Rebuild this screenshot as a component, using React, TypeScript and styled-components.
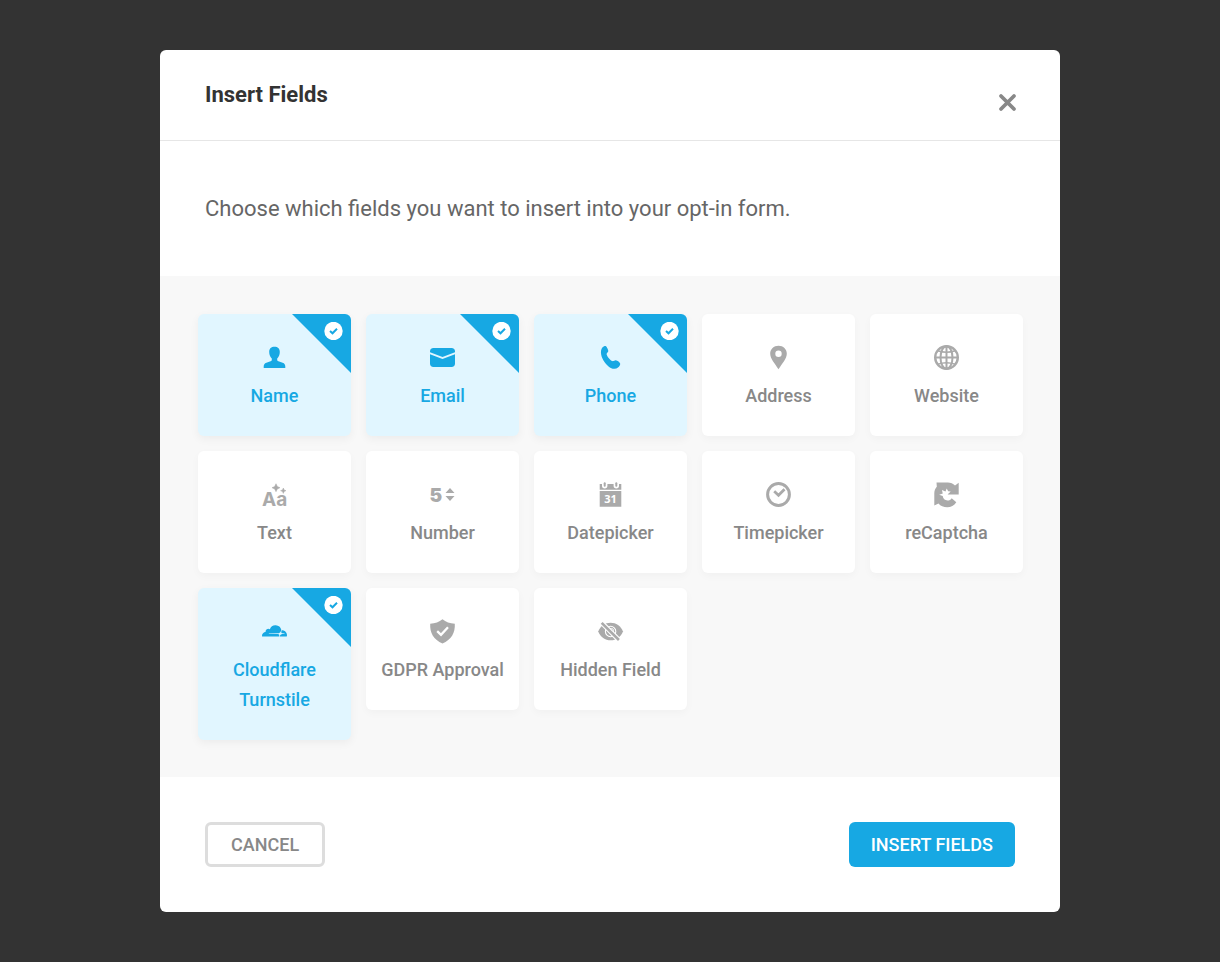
import React, { useState } from 'react';
import styled, { createGlobalStyle, css } from 'styled-components';
import { FaCloudflare } from 'react-icons/fa';

const GlobalStyle = createGlobalStyle`
  * { box-sizing: border-box; }
  body {
    margin: 0;
    background: #333;
    font-family: Roboto, "Liberation Sans", sans-serif;
  }
`;

const Overlay = styled.main`
  display: flex;
  justify-content: center;
  align-items: flex-start;
  min-height: 100vh;
  padding: 50px 20px;
  background: #333;
`;

const Modal = styled.form`
  width: 100%;
  max-width: 900px;
  background: #fff;
  border-radius: 6px;
  overflow: hidden;
`;

const Header = styled.header`
  display: flex;
  justify-content: space-between;
  align-items: flex-start;
  padding: 30px 30px 15px 45px;
  border-bottom: 1px solid #e6e6e6;
`;

const Title = styled.h1`
  margin: 0;
  font-size: 22px;
  line-height: 30px;
  font-weight: 700;
  color: #333;
`;

const CloseButton = styled.button`
  display: grid;
  place-items: center;
  width: 45px;
  height: 45px;
  padding: 0;
  border: 0;
  background: none;
  color: #888;
  cursor: pointer;
`;

const Intro = styled.p`
  margin: 0;
  padding: 45px;
  font-size: 22px;
  line-height: 45px;
  color: #666;
`;

const FieldGrid = styled.div`
  display: grid;
  grid-template-columns: repeat(5, 1fr);
  align-items: start;
  gap: 15px;
  padding: 38px 37px 37px 38px;
  background: #f8f8f8;
`;

const FieldCard = styled.label<{ $selected: boolean }>`
  position: relative;
  display: flex;
  flex-direction: column;
  align-items: center;
  gap: 10px;
  padding: 30px 15px 25px;
  border-radius: 6px;
  background: #fff;
  color: #aaa;
  box-shadow: 0 3px 8px rgba(0, 0, 0, 0.03);
  overflow: hidden;
  cursor: pointer;
  ${(p) =>
    p.$selected &&
    css`
      background: #e1f6ff;
      color: #17a8e3;
      box-shadow: 0 3px 10px rgba(0, 0, 0, 0.05);
    `}
`;

const HiddenCheckbox = styled.input`
  position: absolute;
  inset: 0;
  width: 100%;
  height: 100%;
  margin: 0;
  opacity: 0;
  cursor: pointer;
`;

const IconBox = styled.span`
  display: grid;
  place-items: center;
  height: 27px;
`;

const FieldName = styled.span<{ $selected: boolean }>`
  font-size: 18px;
  line-height: 30px;
  font-weight: 500;
  text-align: center;
  color: ${(p) => (p.$selected ? '#17a8e3' : '#888')};
`;

const Corner = styled.span`
  position: absolute;
  top: 0;
  right: 0;
  display: flex;
  justify-content: flex-end;
  width: 59px;
  height: 59px;
  padding: 8px;
  background: #17a8e3;
  clip-path: polygon(0 0, 100% 0, 100% 100%);
`;

const Footer = styled.footer`
  display: flex;
  justify-content: space-between;
  padding: 45px;
`;

const Button = styled.button<{ $primary?: boolean }>`
  height: 45px;
  padding: 0 23px;
  border: 3px solid #ddd;
  border-radius: 6px;
  background: #fff;
  font-family: inherit;
  font-size: 18px;
  line-height: 24px;
  font-weight: 500;
  color: #888;
  text-transform: uppercase;
  cursor: pointer;
  ${(p) =>
    p.$primary &&
    css`
      padding: 0 22px;
      border: 0;
      background: #17a8e3;
      color: #fff;
    `}
`;

const GlyphSvg = styled.svg`
  display: block;
  overflow: visible;
`;

const Glyph = ({ children }: { children: React.ReactNode }) => (
  <GlyphSvg width="27" height="27" viewBox="0 0 27 27" fill="currentColor" aria-hidden="true">
    {children}
  </GlyphSvg>
);

const icons: Record<string, React.ReactNode> = {
  name: (
    <Glyph>
      <path d="M13.500 2.700c3.200 0 5.300 1.900 5.300 5.200 0 2.900-1.100 5.200-2.600 6.500v1.300c0 .8.4 1.200 1.200 1.500l4.200 1.500c1.900.7 2.700 1.900 2.700 3.800V24H2.700v-1.500c0-1.900.8-3.100 2.700-3.800l4.200-1.500c.8-.3 1.200-.7 1.200-1.500v-1.300C9.300 13.100 8.200 10.800 8.200 7.900c0-3.300 2.100-5.200 5.300-5.200z" />
    </Glyph>
  ),
  email: (
    <Glyph>
      <path d="M1 8.300V7.500C1 5.300 2.200 4 4.500 4h18C24.800 4 26 5.300 26 7.500v.8l-12.500 4.600z" />
      <path d="M1 10.200l12.500 4.900L26 10.200v9.300c0 2.200-1.200 3.500-3.500 3.500h-18C2.200 23 1 21.700 1 19.500z" />
    </Glyph>
  ),
  phone: (
    <Glyph>
      <path d="M5.600 3.300c.9-.9 2.200-1.600 3-1.300 1.200.5 2.600 3.600 2.700 4.900.1 1.100-1.700 1.900-1.700 3.100 0 2 3.600 6.400 5.700 7.100 1.300.4 2.400-1.100 3.600-.9 1.300.2 4.200 2.200 4.300 3.500.1 1.100-.9 2.800-2.200 3.900-1.800 1.500-4.600 1.600-7.200.3C9.300 21.600 5.200 15.700 4.200 10.700 3.600 7.600 4 4.900 5.600 3.300z" />
    </Glyph>
  ),
  address: (
    <Glyph>
      <path fillRule="evenodd" d="M13.500 1.700c4.700 0 8.300 3.500 8.300 8 0 4.800-4.600 9.700-8.300 15.600C9.800 19.400 5.200 14.500 5.200 9.700c0-4.500 3.600-8 8.300-8zm0 4.800a3.200 3.200 0 100 6.400 3.200 3.200 0 000-6.400z" />
    </Glyph>
  ),
  website: (
    <Glyph>
      <g fill="none" stroke="currentColor" strokeWidth="2">
        <circle cx="13.500" cy="13.500" r="11.300" strokeWidth="2.400" />
        <ellipse cx="13.500" cy="13.500" rx="6" ry="11.300" />
        <path d="M13.500 2v23M2 13.500h23" />
        <path d="M4.800 6.800c5.300 1.800 12.100 1.800 17.400 0M4.800 20.200c5.300-1.800 12.100-1.800 17.400 0" strokeWidth="1.500" />
      </g>
    </Glyph>
  ),
  text: (
    <Glyph>
      <text x="1" y="25" fontFamily="Inter, sans-serif" fontWeight="700" fontSize="19">Aa</text>
      <path d="M15 2.700l1.300 2.700 2.700 1.300-2.700 1.300L15 10.700 13.700 8 11 6.700l2.700-1.300zM22.300 7l.8 1.900 1.900.8-1.900.8-.8 1.900-.8-1.900-1.900-.8 1.900-.8z" stroke="currentColor" strokeWidth="0.500" />
    </Glyph>
  ),
  number: (
    <Glyph>
      <text x="0.600" y="20.500" fontFamily="Inter, sans-serif" fontWeight="900" fontSize="19">5</text>
      <path d="M16.500 12l4.500-5 4.500 5zM16.500 15h9L21 20z" />
    </Glyph>
  ),
  date: (
    <Glyph>
      <path d="M2.700 3H5v1.800a2.700 2.700 0 005.400 0V3h6.200v1.800a2.700 2.700 0 005.400 0V3h2.300v5.700H2.700zM2.700 10h21.600v15.700H2.700z" />
      <rect x="6.700" y="1.300" width="2" height="4.500" rx="1" />
      <rect x="18.300" y="1.300" width="2" height="4.500" rx="1" />
      <text x="13.500" y="22" textAnchor="middle" fill="#fff" fontFamily="Open Sans, sans-serif" fontWeight="700" fontSize="11">31</text>
    </Glyph>
  ),
  time: (
    <Glyph>
      <circle cx="13.500" cy="13.500" r="10.900" fill="none" stroke="currentColor" strokeWidth="3" />
      <path d="M9.200 10.300l4.300 4 6-6.100" fill="none" stroke="currentColor" strokeWidth="2.800" />
    </Glyph>
  ),
  captcha: (
    <Glyph>
      <path d="M3.500 1.500h11.300c3 0 5.200 1 7.200 2.900l3.700-2.700v11.900H14.500l3.200-3.100-2.500-.3-1.500-2.700-1.200 3.100-3.600-1.600.9 3.500-3.600 1.200 3.500 1.400c.3 2.600 2.200 4.400 4.700 4.400 2 0 3.400-.9 4.300-2.300l4.600 4c-2.200 3.300-5.300 5-9.100 5-3.700 0-6.600-1.300-8.700-3.800L1.300 24.500V12.300c0-2.600.8-4.800 2.500-6.600z" />
      <path d="M11.800 10.800l1 1.600 2.400-.9-1 2.400 1.600 1.400-2.700.2-1.300 1.700-.6-2.300-1.800-1.300 1.900-.6z" fill="#fff" />
    </Glyph>
  ),
  cloudflare: <FaCloudflare size={25} aria-hidden="true" />,
  gdpr: (
    <Glyph>
      <path d="M13.500 1.300c3.300 2.700 7.300 4.200 12.300 4.500.5 9-3.500 16.200-12.300 19.600C4.700 22 .7 14.800 1.200 5.800c5-.3 9-1.800 12.300-4.500z" />
      <path d="M8.200 13.200l3.800 3.600 7-7.500" fill="none" stroke="#fff" strokeWidth="2.300" />
    </Glyph>
  ),
  hidden: (
    <Glyph>
      <path d="M1.200 13.500C3.500 8 8 4.700 13.600 4.700S23.700 8 26 13.500c-2.300 5.500-6.800 8.800-12.400 8.800S3.500 19 1.200 13.500z" />
      <circle cx="13.600" cy="13.500" r="5.200" fill="none" stroke="#fff" strokeWidth="1.100" />
      <circle cx="14.300" cy="12.700" r="2.300" fill="none" stroke="#fff" strokeWidth="0.900" />
      <path d="M5.200 5.300l16.700 16.700" stroke="#fff" strokeWidth="4.800" />
      <path d="M4.700 4.800l17.200 17.200" stroke="currentColor" strokeWidth="2.600" />
    </Glyph>
  ),
};

const fields = [
  { id: 'name', label: 'Name' },
  { id: 'email', label: 'Email' },
  { id: 'phone', label: 'Phone' },
  { id: 'address', label: 'Address' },
  { id: 'website', label: 'Website' },
  { id: 'text', label: 'Text' },
  { id: 'number', label: 'Number' },
  { id: 'date', label: 'Datepicker' },
  { id: 'time', label: 'Timepicker' },
  { id: 'captcha', label: 'reCaptcha' },
  { id: 'cloudflare', label: 'Cloudflare Turnstile' },
  { id: 'gdpr', label: 'GDPR Approval' },
  { id: 'hidden', label: 'Hidden Field' },
];

export default function App() {
  const [selected, setSelected] = useState<string[]>(['name', 'email', 'phone', 'cloudflare']);
  const toggle = (id: string) =>
    setSelected((s) => (s.includes(id) ? s.filter((x) => x !== id) : [...s, id]));

  return (
    <Overlay>
      <GlobalStyle />
      <Modal onSubmit={(e) => e.preventDefault()}>
        <Header>
          <Title>Insert Fields</Title>
          <CloseButton type="button" aria-label="Close">
            <svg width="19" height="19" viewBox="0 0 19 19" aria-hidden="true">
              <path d="M3 3l13 13M16 3L3 16" stroke="currentColor" strokeWidth="3.800" strokeLinecap="round" />
            </svg>
          </CloseButton>
        </Header>
        <Intro>Choose which fields you want to insert into your opt-in form.</Intro>
        <FieldGrid>
          {fields.map(({ id, label }) => {
            const on = selected.includes(id);
            return (
              <FieldCard key={id} htmlFor={`field-${id}`} $selected={on}>
                <IconBox>{icons[id]}</IconBox>
                <FieldName $selected={on}>{label}</FieldName>
                {on && (
                  <Corner>
                    <svg width="19" height="18" viewBox="0 0 19 18" aria-hidden="true">
                      <circle cx="9.500" cy="9" r="9.200" fill="#fff" />
                      <path d="M6 9l2.500 2.300 4.500-4.600" fill="none" stroke="#17a8e3" strokeWidth="2" />
                    </svg>
                  </Corner>
                )}
                <HiddenCheckbox id={`field-${id}`} type="checkbox" checked={on} onChange={() => toggle(id)} />
              </FieldCard>
            );
          })}
        </FieldGrid>
        <Footer>
          <Button type="button">Cancel</Button>
          <Button type="submit" $primary>Insert Fields</Button>
        </Footer>
      </Modal>
    </Overlay>
  );
}
